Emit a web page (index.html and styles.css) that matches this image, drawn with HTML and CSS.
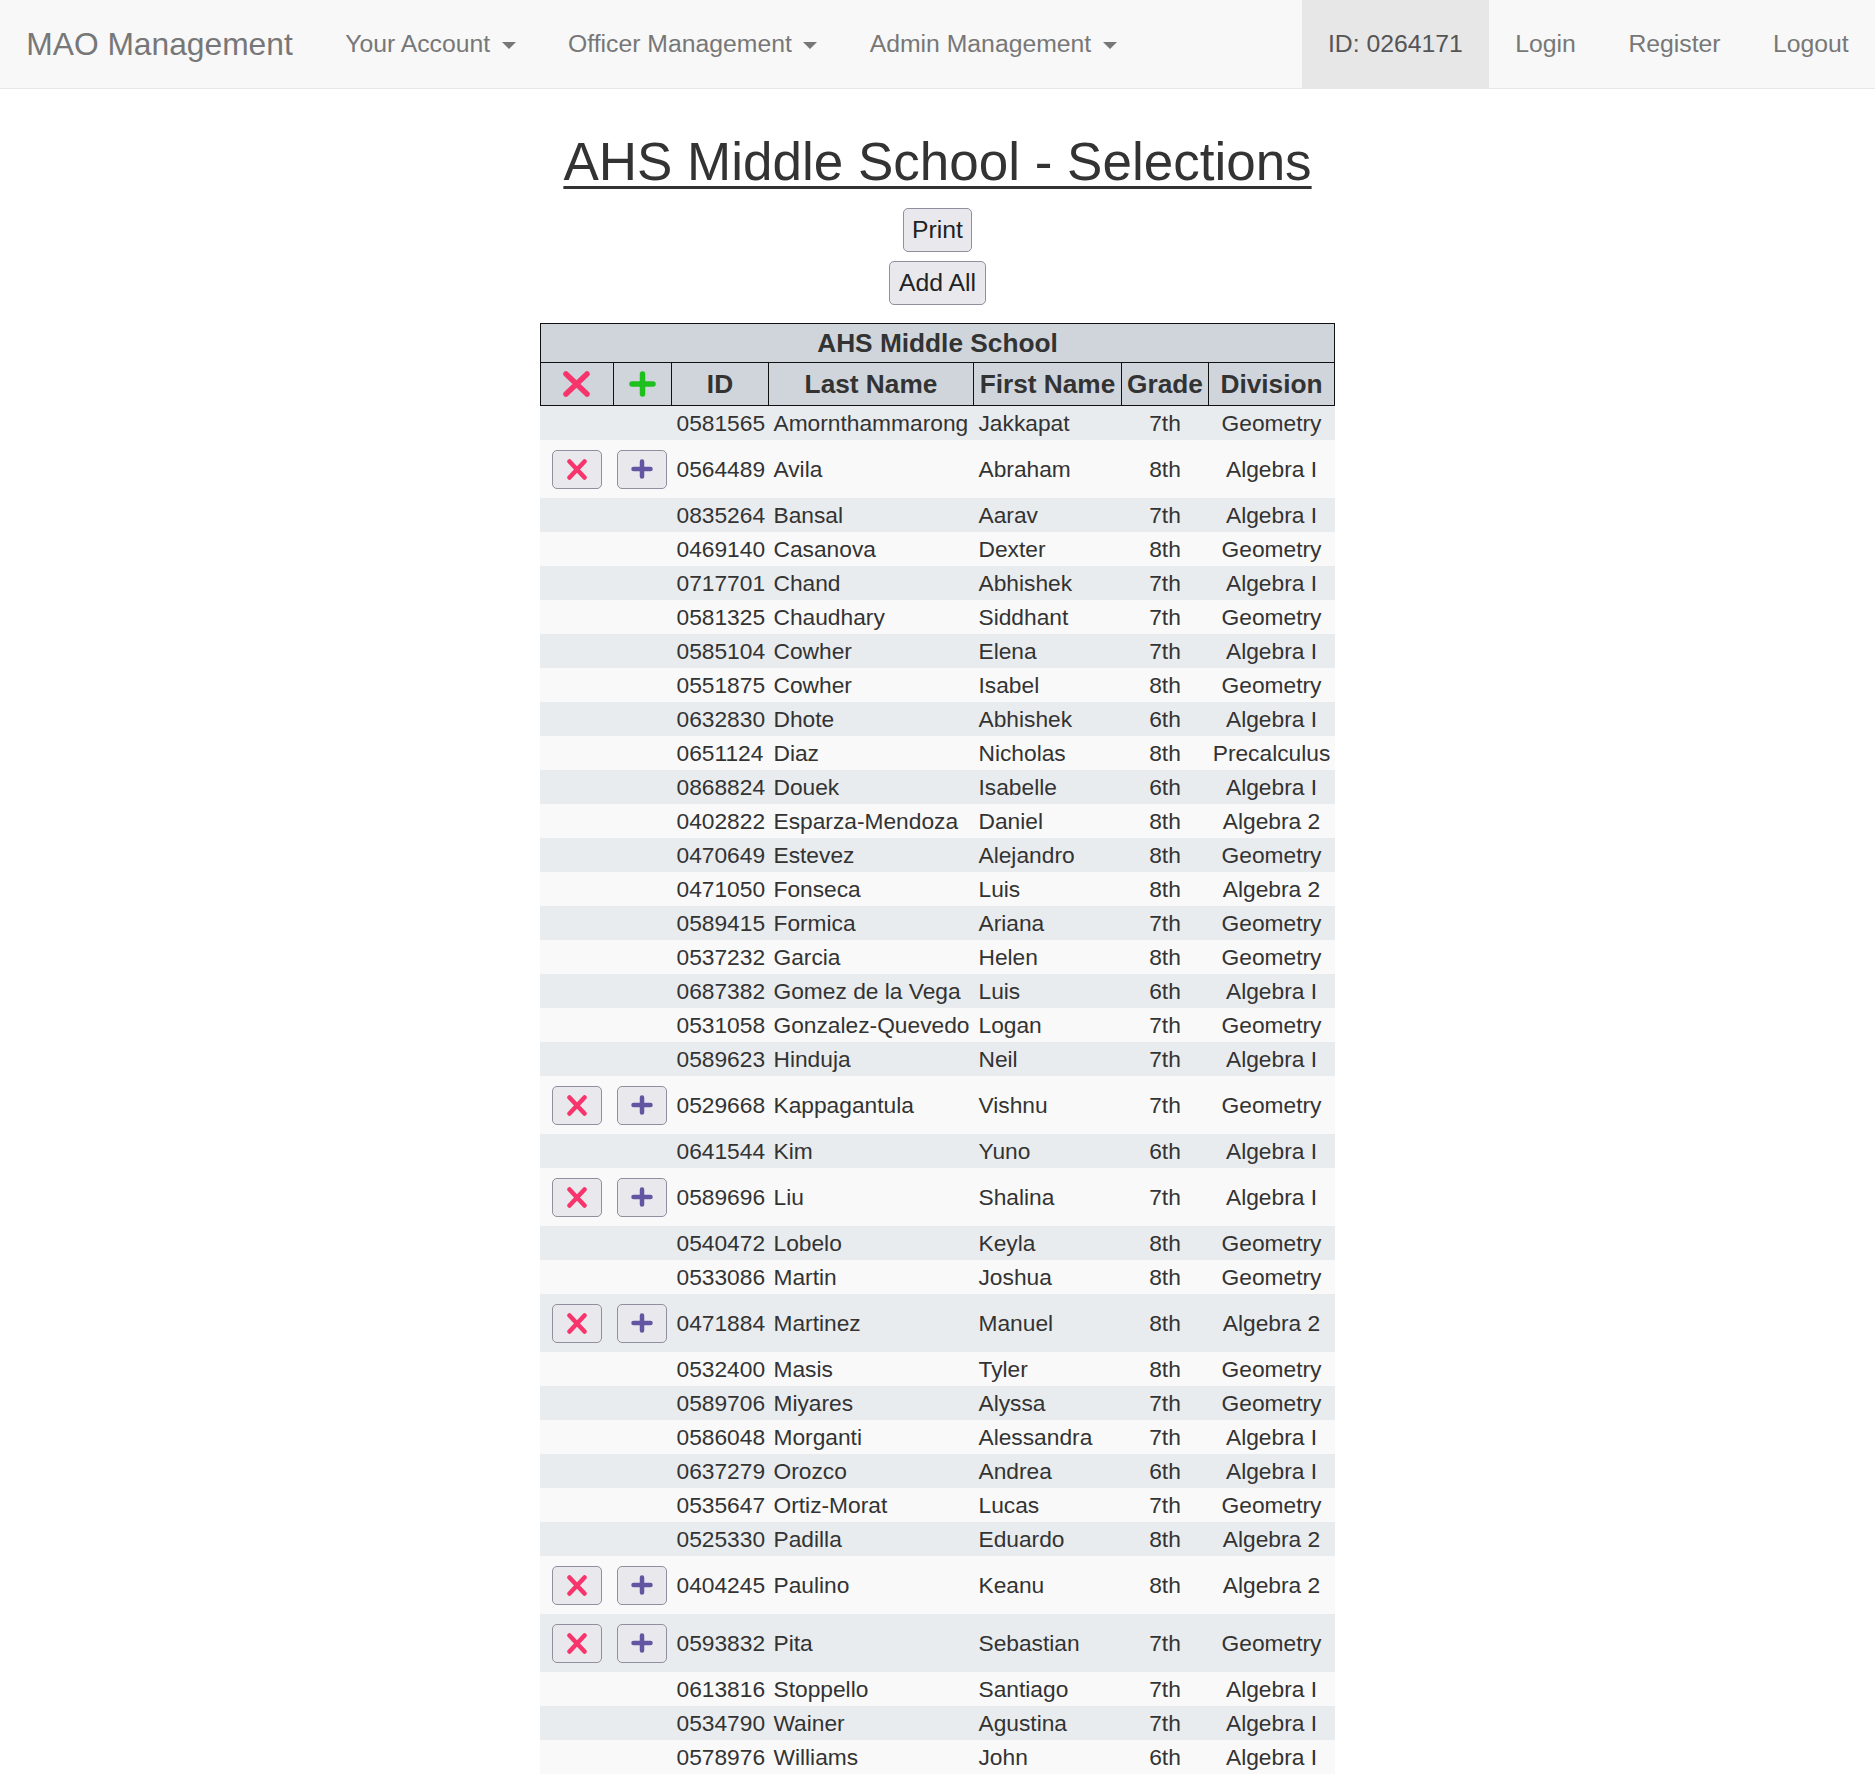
FILE: index.html
```html
<!DOCTYPE html>
<html lang="en">
<head>
<meta charset="utf-8">
<title>AHS Middle School - Selections</title>
<link rel="stylesheet" href="styles.css">
</head>
<body>
<nav class="navbar">
  <div class="nav-group">
    <a class="brand">MAO Management</a>
    <a class="nav-link">Your Account <span class="caret"></span></a>
    <a class="nav-link">Officer Management <span class="caret"></span></a>
    <a class="nav-link">Admin Management <span class="caret"></span></a>
  </div>
  <div class="nav-group">
    <a class="nav-link active">ID: 0264171</a>
    <a class="nav-link">Login</a>
    <a class="nav-link">Register</a>
    <a class="nav-link">Logout</a>
  </div>
</nav>

<h1 class="page-title">AHS Middle School - Selections</h1>
<div class="actions">
  <button class="btn">Print</button>
  <button class="btn">Add All</button>
</div>

<table class="roster">
  <colgroup>
    <col class="w-del"><col class="w-add"><col class="w-id"><col class="w-last"><col class="w-first"><col class="w-grade"><col class="w-div">
  </colgroup>
  <thead>
    <tr class="title-row"><th colspan="7">AHS Middle School</th></tr>
    <tr class="head-row">
      <th><svg class="ico-head" width="27" height="26" viewBox="0 0 27 26"><path d="M3 3 L24 23 M24 3 L3 23" stroke="#f7346b" stroke-width="5.5" stroke-linecap="round" fill="none"/></svg></th>
      <th><svg class="ico-head" width="27" height="26" viewBox="0 0 27 26"><path d="M3 13 L24 13 M13.5 3 L13.5 23" stroke="#1fbf1f" stroke-width="5.5" stroke-linecap="round" fill="none"/></svg></th>
      <th>ID</th><th>Last Name</th><th>First Name</th><th>Grade</th><th>Division</th>
    </tr>
  </thead>
  <tbody>
    <tr><td></td><td></td><td>0581565</td><td>Amornthammarong</td><td>Jakkapat</td><td class="grade">7th</td><td class="div">Geometry</td></tr>
    <tr class="btn-row"><td class="c"><button class="icon-btn"><svg width="20" height="21" viewBox="0 0 20 21"><path d="M2.5 2.5 L17.5 18.5 M17.5 2.5 L2.5 18.5" stroke="#f7346b" stroke-width="4.5" stroke-linecap="round" fill="none"/></svg></button></td><td class="c"><button class="icon-btn"><svg width="22" height="20" viewBox="0 0 22 20"><path d="M2.5 10 L19.5 10 M11 2.5 L11 17.5" stroke="#6256a3" stroke-width="4.5" stroke-linecap="round" fill="none"/></svg></button></td><td>0564489</td><td>Avila</td><td>Abraham</td><td class="grade">8th</td><td class="div">Algebra I</td></tr>
    <tr><td></td><td></td><td>0835264</td><td>Bansal</td><td>Aarav</td><td class="grade">7th</td><td class="div">Algebra I</td></tr>
    <tr><td></td><td></td><td>0469140</td><td>Casanova</td><td>Dexter</td><td class="grade">8th</td><td class="div">Geometry</td></tr>
    <tr><td></td><td></td><td>0717701</td><td>Chand</td><td>Abhishek</td><td class="grade">7th</td><td class="div">Algebra I</td></tr>
    <tr><td></td><td></td><td>0581325</td><td>Chaudhary</td><td>Siddhant</td><td class="grade">7th</td><td class="div">Geometry</td></tr>
    <tr><td></td><td></td><td>0585104</td><td>Cowher</td><td>Elena</td><td class="grade">7th</td><td class="div">Algebra I</td></tr>
    <tr><td></td><td></td><td>0551875</td><td>Cowher</td><td>Isabel</td><td class="grade">8th</td><td class="div">Geometry</td></tr>
    <tr><td></td><td></td><td>0632830</td><td>Dhote</td><td>Abhishek</td><td class="grade">6th</td><td class="div">Algebra I</td></tr>
    <tr><td></td><td></td><td>0651124</td><td>Diaz</td><td>Nicholas</td><td class="grade">8th</td><td class="div">Precalculus</td></tr>
    <tr><td></td><td></td><td>0868824</td><td>Douek</td><td>Isabelle</td><td class="grade">6th</td><td class="div">Algebra I</td></tr>
    <tr><td></td><td></td><td>0402822</td><td>Esparza-Mendoza</td><td>Daniel</td><td class="grade">8th</td><td class="div">Algebra 2</td></tr>
    <tr><td></td><td></td><td>0470649</td><td>Estevez</td><td>Alejandro</td><td class="grade">8th</td><td class="div">Geometry</td></tr>
    <tr><td></td><td></td><td>0471050</td><td>Fonseca</td><td>Luis</td><td class="grade">8th</td><td class="div">Algebra 2</td></tr>
    <tr><td></td><td></td><td>0589415</td><td>Formica</td><td>Ariana</td><td class="grade">7th</td><td class="div">Geometry</td></tr>
    <tr><td></td><td></td><td>0537232</td><td>Garcia</td><td>Helen</td><td class="grade">8th</td><td class="div">Geometry</td></tr>
    <tr><td></td><td></td><td>0687382</td><td>Gomez de la Vega</td><td>Luis</td><td class="grade">6th</td><td class="div">Algebra I</td></tr>
    <tr><td></td><td></td><td>0531058</td><td>Gonzalez-Quevedo</td><td>Logan</td><td class="grade">7th</td><td class="div">Geometry</td></tr>
    <tr><td></td><td></td><td>0589623</td><td>Hinduja</td><td>Neil</td><td class="grade">7th</td><td class="div">Algebra I</td></tr>
    <tr class="btn-row"><td class="c"><button class="icon-btn"><svg width="20" height="21" viewBox="0 0 20 21"><path d="M2.5 2.5 L17.5 18.5 M17.5 2.5 L2.5 18.5" stroke="#f7346b" stroke-width="4.5" stroke-linecap="round" fill="none"/></svg></button></td><td class="c"><button class="icon-btn"><svg width="22" height="20" viewBox="0 0 22 20"><path d="M2.5 10 L19.5 10 M11 2.5 L11 17.5" stroke="#6256a3" stroke-width="4.5" stroke-linecap="round" fill="none"/></svg></button></td><td>0529668</td><td>Kappagantula</td><td>Vishnu</td><td class="grade">7th</td><td class="div">Geometry</td></tr>
    <tr><td></td><td></td><td>0641544</td><td>Kim</td><td>Yuno</td><td class="grade">6th</td><td class="div">Algebra I</td></tr>
    <tr class="btn-row"><td class="c"><button class="icon-btn"><svg width="20" height="21" viewBox="0 0 20 21"><path d="M2.5 2.5 L17.5 18.5 M17.5 2.5 L2.5 18.5" stroke="#f7346b" stroke-width="4.5" stroke-linecap="round" fill="none"/></svg></button></td><td class="c"><button class="icon-btn"><svg width="22" height="20" viewBox="0 0 22 20"><path d="M2.5 10 L19.5 10 M11 2.5 L11 17.5" stroke="#6256a3" stroke-width="4.5" stroke-linecap="round" fill="none"/></svg></button></td><td>0589696</td><td>Liu</td><td>Shalina</td><td class="grade">7th</td><td class="div">Algebra I</td></tr>
    <tr><td></td><td></td><td>0540472</td><td>Lobelo</td><td>Keyla</td><td class="grade">8th</td><td class="div">Geometry</td></tr>
    <tr><td></td><td></td><td>0533086</td><td>Martin</td><td>Joshua</td><td class="grade">8th</td><td class="div">Geometry</td></tr>
    <tr class="btn-row"><td class="c"><button class="icon-btn"><svg width="20" height="21" viewBox="0 0 20 21"><path d="M2.5 2.5 L17.5 18.5 M17.5 2.5 L2.5 18.5" stroke="#f7346b" stroke-width="4.5" stroke-linecap="round" fill="none"/></svg></button></td><td class="c"><button class="icon-btn"><svg width="22" height="20" viewBox="0 0 22 20"><path d="M2.5 10 L19.5 10 M11 2.5 L11 17.5" stroke="#6256a3" stroke-width="4.5" stroke-linecap="round" fill="none"/></svg></button></td><td>0471884</td><td>Martinez</td><td>Manuel</td><td class="grade">8th</td><td class="div">Algebra 2</td></tr>
    <tr><td></td><td></td><td>0532400</td><td>Masis</td><td>Tyler</td><td class="grade">8th</td><td class="div">Geometry</td></tr>
    <tr><td></td><td></td><td>0589706</td><td>Miyares</td><td>Alyssa</td><td class="grade">7th</td><td class="div">Geometry</td></tr>
    <tr><td></td><td></td><td>0586048</td><td>Morganti</td><td>Alessandra</td><td class="grade">7th</td><td class="div">Algebra I</td></tr>
    <tr><td></td><td></td><td>0637279</td><td>Orozco</td><td>Andrea</td><td class="grade">6th</td><td class="div">Algebra I</td></tr>
    <tr><td></td><td></td><td>0535647</td><td>Ortiz-Morat</td><td>Lucas</td><td class="grade">7th</td><td class="div">Geometry</td></tr>
    <tr><td></td><td></td><td>0525330</td><td>Padilla</td><td>Eduardo</td><td class="grade">8th</td><td class="div">Algebra 2</td></tr>
    <tr class="btn-row"><td class="c"><button class="icon-btn"><svg width="20" height="21" viewBox="0 0 20 21"><path d="M2.5 2.5 L17.5 18.5 M17.5 2.5 L2.5 18.5" stroke="#f7346b" stroke-width="4.5" stroke-linecap="round" fill="none"/></svg></button></td><td class="c"><button class="icon-btn"><svg width="22" height="20" viewBox="0 0 22 20"><path d="M2.5 10 L19.5 10 M11 2.5 L11 17.5" stroke="#6256a3" stroke-width="4.5" stroke-linecap="round" fill="none"/></svg></button></td><td>0404245</td><td>Paulino</td><td>Keanu</td><td class="grade">8th</td><td class="div">Algebra 2</td></tr>
    <tr class="btn-row"><td class="c"><button class="icon-btn"><svg width="20" height="21" viewBox="0 0 20 21"><path d="M2.5 2.5 L17.5 18.5 M17.5 2.5 L2.5 18.5" stroke="#f7346b" stroke-width="4.5" stroke-linecap="round" fill="none"/></svg></button></td><td class="c"><button class="icon-btn"><svg width="22" height="20" viewBox="0 0 22 20"><path d="M2.5 10 L19.5 10 M11 2.5 L11 17.5" stroke="#6256a3" stroke-width="4.5" stroke-linecap="round" fill="none"/></svg></button></td><td>0593832</td><td>Pita</td><td>Sebastian</td><td class="grade">7th</td><td class="div">Geometry</td></tr>
    <tr><td></td><td></td><td>0613816</td><td>Stoppello</td><td>Santiago</td><td class="grade">7th</td><td class="div">Algebra I</td></tr>
    <tr><td></td><td></td><td>0534790</td><td>Wainer</td><td>Agustina</td><td class="grade">7th</td><td class="div">Algebra I</td></tr>
    <tr><td></td><td></td><td>0578976</td><td>Williams</td><td>John</td><td class="grade">6th</td><td class="div">Algebra I</td></tr>
  </tbody>
</table>
</body>
</html>
```

FILE: styles.css
```css
html, body {
  margin: 0;
  padding: 0;
}

body {
  font-family: "Liberation Sans", Arial, sans-serif;
  color: #333;
  background: #fff;
}

/* Navbar */
.navbar {
  display: flex;
  justify-content: space-between;
  height: 88px;
  background: #f8f8f8;
  border-bottom: 1px solid #e7e7e7;
}

.nav-group {
  display: flex;
}

.brand {
  padding: 0 26.25px;
  font-size: 31.75px;
  line-height: 88px;
  color: #777;
  white-space: nowrap;
}

.nav-link {
  padding: 0 26.25px;
  font-size: 24.75px;
  line-height: 88px;
  color: #777;
  white-space: nowrap;
}

.nav-link.active {
  background: #e7e7e7;
  color: #555;
}

.caret {
  display: inline-block;
  width: 0;
  height: 0;
  margin-left: 4.5px;
  vertical-align: middle;
  border-top: 7px solid;
  border-left: 7px solid transparent;
  border-right: 7px solid transparent;
}

/* Title + actions */
.page-title {
  margin: 44px 0 17px;
  text-align: center;
  font-size: 53px;
  line-height: 58px;
  font-weight: normal;
  color: #333;
  text-decoration: underline;
  text-decoration-thickness: 3px;
  text-underline-offset: 6px;
}

.actions {
  display: flex;
  flex-direction: column;
  align-items: center;
  gap: 9px;
  margin-bottom: 18px;
}

.btn {
  font-family: "Liberation Sans", Arial, sans-serif;
  font-size: 24.75px;
  line-height: 28px;
  padding: 7px 8.5px;
  border: 1px solid #8f8f9d;
  border-radius: 5px;
  background: #e9e9ed;
  color: #222;
}

/* Table */
.roster {
  border-collapse: collapse;
  table-layout: fixed;
  width: 794px;
  margin: 0 auto;
  font-size: 22.75px;
  color: #333;
}

.w-del { width: 73px; }
.w-add { width: 58px; }
.w-id { width: 97px; }
.w-last { width: 205px; }
.w-first { width: 148px; }
.w-grade { width: 87px; }
.w-div { width: 126px; }

.roster th {
  background: #d0d5dc;
  border: 1px solid #111;
  font-size: 26.25px;
  font-weight: bold;
  color: #333;
  padding: 0;
  text-align: center;
  white-space: nowrap;
  vertical-align: middle;
}

.title-row th {
  height: 38px;
}

.head-row th {
  height: 42px;
}

.ico-head {
  display: block;
  margin: 0 auto;
}

.roster td {
  height: 34px;
  padding: 0 5px;
  white-space: nowrap;
  vertical-align: middle;
}

.roster td.c {
  padding: 0;
  text-align: center;
}

.roster td.grade {
  text-align: center;
  padding: 0;
}

.roster td.div {
  text-align: center;
  padding: 0 3px;
}

.roster tr.btn-row td {
  height: 58px;
}

.roster tbody tr:nth-child(odd) {
  background: #e9ecef;
}

.roster tbody tr:nth-child(even) {
  background: #f9f9fa;
}

.icon-btn {
  display: inline-flex;
  align-items: center;
  justify-content: center;
  width: 50px;
  height: 39px;
  padding: 0;
  border: 1px solid #8f8f9d;
  border-radius: 5px;
  background: #e9e9ed;
  vertical-align: middle;
}

.icon-btn svg {
  display: block;
}
```
